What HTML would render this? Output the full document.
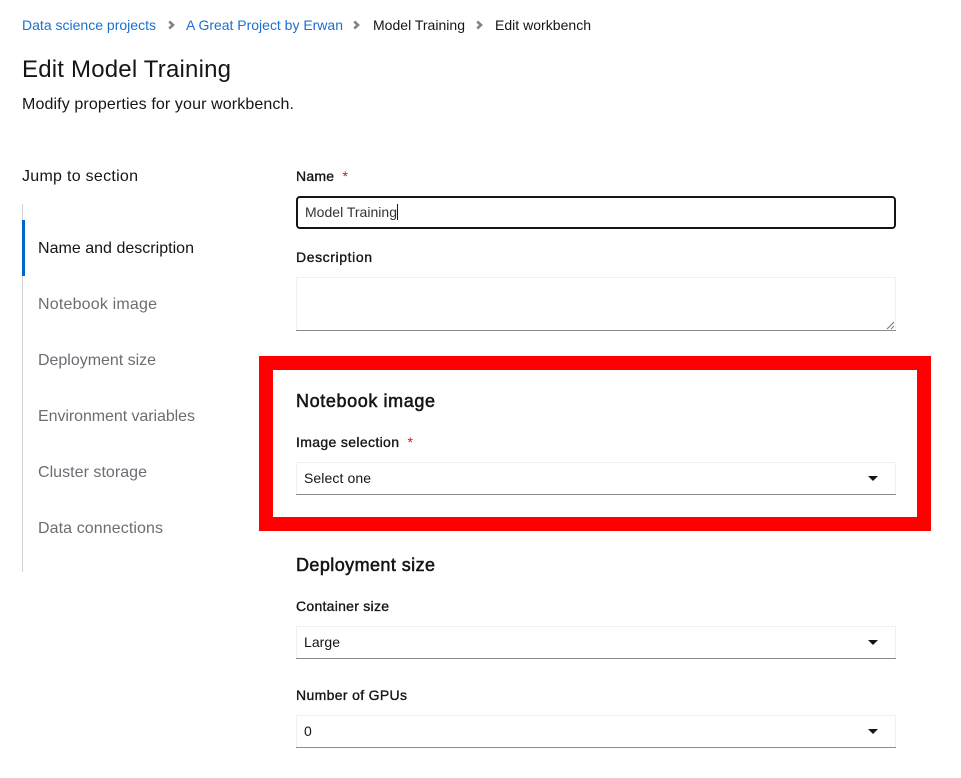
<!DOCTYPE html>
<html lang="en"><head><meta charset="utf-8"><title>Edit Model Training</title>
<style>
html,body{margin:0;padding:0;background:#fff;width:961px;height:778px;overflow:hidden}
svg{display:block;font-family:"Liberation Sans",sans-serif}
.m{stroke:#151515;stroke-width:.35;fill:#151515}
.h{stroke:#151515;stroke-width:.55;fill:#151515}
.g{fill:#6a6e73;font-size:16px}
.t{fill:#151515;font-size:14px}
.l{fill:#1a6fd0;font-size:14px}
.s{fill:#151515;font-size:14px}
</style></head><body>
<svg width="961" height="778" viewBox="0 0 961 778" xmlns="http://www.w3.org/2000/svg">
<rect width="961" height="778" fill="#fff"/>
<text class="l" x="22" y="30" textLength="134">Data science projects</text>
<path d="M169.200 21.500l3.800 3.500-3.800 3.500" fill="none" stroke="#80848a" stroke-width="2.600"/>
<text class="l" x="186" y="30" textLength="157">A Great Project by Erwan</text>
<path d="M354.200 21.500l3.800 3.500-3.800 3.500" fill="none" stroke="#80848a" stroke-width="2.600"/>
<text class="t" x="373" y="30" textLength="92">Model Training</text>
<path d="M477.200 21.500l3.800 3.500-3.800 3.500" fill="none" stroke="#80848a" stroke-width="2.600"/>
<text class="t" x="495" y="30" textLength="96">Edit workbench</text>
<text x="22" y="77" font-size="24" fill="#151515" textLength="209">Edit Model Training</text>
<text x="22" y="109" font-size="16" fill="#151515" textLength="272">Modify properties for your workbench.</text>
<text x="22" y="181" font-size="16" fill="#151515" textLength="116">Jump to section</text>
<rect x="22" y="204" width="1" height="368" fill="#d2d2d2"/>
<rect x="22" y="220" width="3" height="56" fill="#06c"/>
<text x="38" y="253" font-size="16" fill="#151515" textLength="156">Name and description</text>
<text class="g" x="38" y="309" textLength="119">Notebook image</text>
<text class="g" x="38" y="365" textLength="118">Deployment size</text>
<text class="g" x="38" y="421" textLength="157">Environment variables</text>
<text class="g" x="38" y="477" textLength="109">Cluster storage</text>
<text class="g" x="38" y="533" textLength="125">Data connections</text>
<text class="m" x="296" y="181" font-size="14" textLength="38">Name</text>
<text x="342.500" y="181" font-size="14" fill="#c9190b">*</text>
<rect x="297" y="197" width="598" height="31" rx="3" fill="#fff" stroke="#151515" stroke-width="2"/>
<text x="305" y="217" font-size="14" fill="#333" textLength="92">Model Training</text>
<rect x="397" y="204" width="1" height="16" fill="#151515"/>
<text class="m" x="296" y="262" font-size="14" textLength="76">Description</text>
<rect x="296.500" y="277.500" width="599" height="53" fill="#fff" stroke="#f0f0f0"/>
<rect x="296" y="330" width="600" height="1" fill="#8a8d90"/>
<path d="M887 329l7-7M891 329l3-3" stroke="#777" stroke-width="1" fill="none"/>
<rect x="266" y="363" width="658" height="161" fill="none" stroke="#f00" stroke-width="14"/>
<text class="h" x="296" y="407" font-size="18" textLength="139">Notebook image</text>
<text class="m" x="296" y="447" font-size="14" textLength="103">Image selection</text>
<text x="407.500" y="447" font-size="14" fill="#c9190b">*</text>
<rect x="296.500" y="462.500" width="599" height="32" fill="#fff" stroke="#f0f0f0"/>
<rect x="296" y="494" width="600" height="1" fill="#8a8d90"/>
<text class="s" x="304" y="483" textLength="67">Select one</text>
<path d="M868 476h10l-5 5z" fill="#151515"/>
<text class="h" x="296" y="571" font-size="18" textLength="139">Deployment size</text>
<text class="m" x="296" y="611" font-size="14" textLength="93">Container size</text>
<rect x="296.500" y="626.500" width="599" height="32" fill="#fff" stroke="#f0f0f0"/>
<rect x="296" y="658" width="600" height="1" fill="#8a8d90"/>
<text class="s" x="304" y="647" textLength="36">Large</text>
<path d="M868 640h10l-5 5z" fill="#151515"/>
<text class="m" x="296" y="700" font-size="14" textLength="111">Number of GPUs</text>
<rect x="296.500" y="715.500" width="599" height="32" fill="#fff" stroke="#f0f0f0"/>
<rect x="296" y="747" width="600" height="1" fill="#8a8d90"/>
<text class="s" x="304" y="736">0</text>
<path d="M868 729h10l-5 5z" fill="#151515"/>
</svg>
</body></html>
